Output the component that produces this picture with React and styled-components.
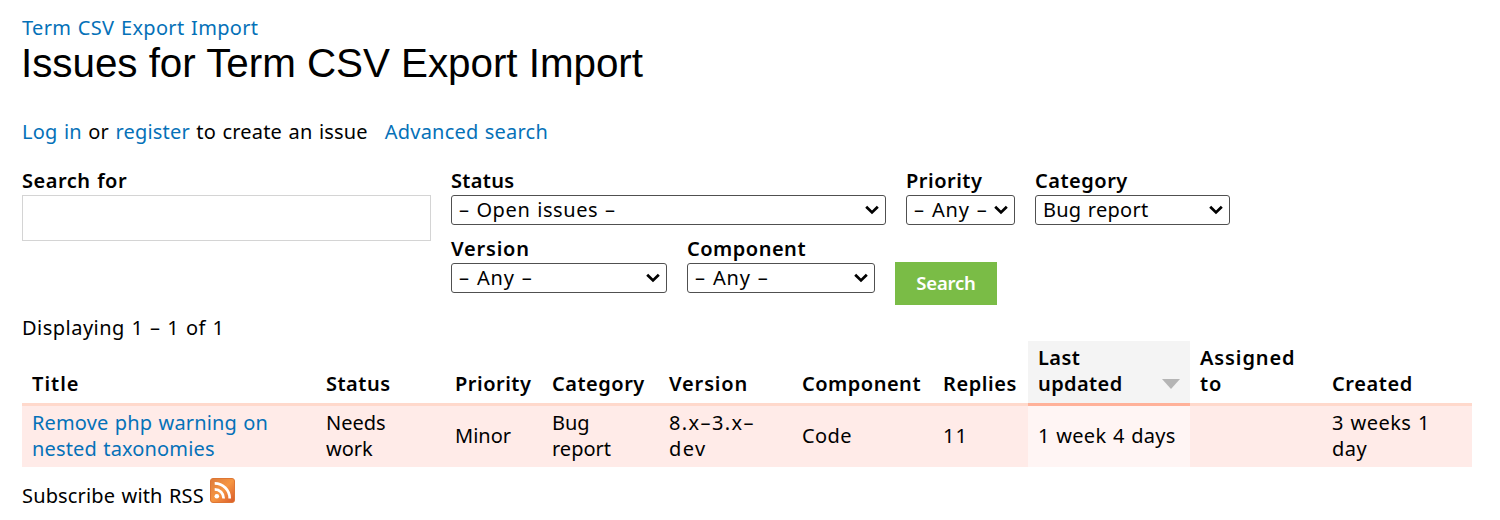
import React from "react";
import styled, { createGlobalStyle } from "styled-components";

const GlobalStyle = createGlobalStyle`
  *, *::before, *::after { box-sizing: border-box; }
  body {
    margin: 0;
    background: #fff;
    color: #000;
    font: 20px/26px "Noto Sans", "Open Sans", sans-serif;
    letter-spacing: 0.2px;
    word-spacing: 1px;
  }
`;

const Page = styled.main`
  width: 1500px;
  height: 520px;
  padding: 15px 28px 0 22px;
  overflow: hidden;
`;

const Link = styled.a`
  color: #0571b8;
  text-decoration: none;
`;

const Breadcrumb = styled.nav`
  height: 25px;
  letter-spacing: 0.33px;
`;

const Heading = styled.h1`
  margin: 0 0 33px -1px;
  font: 400 40.4px/46px "Liberation Sans", sans-serif;
  letter-spacing: -0.04px;
  word-spacing: 0;
`;

const Actions = styled.div`
  display: flex;
  gap: 17px;
  height: 26px;
  margin: 0 0 23px 0;
`;

const Filters = styled.form`
  display: flex;
  gap: 20px;
  margin-bottom: 10px;
`;

const FilterRows = styled.div`
  display: flex;
  flex-direction: column;
  gap: 10px;
`;

const FilterRow = styled.div`
  display: flex;
  gap: 20px;
  height: ${(p) => p.$height}px;
`;

const Field = styled.label`
  display: flex;
  flex-direction: column;
  width: ${(p) => p.$width}px;
`;

const Label = styled.span`
  height: 27px;
  font-weight: 600;
  letter-spacing: ${(p) => p.$tracking ?? 0.5}px;
`;

const TextInput = styled.input`
  width: 100%;
  height: 46px;
  border: 1px solid #d4d4d4;
  background: #fff;
`;

const Select = styled.button`
  display: flex;
  align-items: center;
  justify-content: space-between;
  width: 100%;
  height: 30px;
  padding: 0 5px 0 7px;
  border: 1px solid #505050;
  border-radius: 3px;
  background: #fff;
  color: #000;
  font: inherit;
  white-space: nowrap;
  letter-spacing: ${(p) => p.$tracking ?? 0.85}px;
  word-spacing: 1px;
`;

const Submit = styled.button`
  width: 102px;
  height: 43px;
  margin-top: 26px;
  padding: 0 0 2px;
  border: 0;
  background: #7abc46;
  color: #fff;
  font: 600 18.5px/41px "Noto Sans", sans-serif;
  letter-spacing: -0.2px;
`;

const Summary = styled.div`
  height: 26px;
  letter-spacing: 0.48px;
`;

const Table = styled.table`
  width: 1450px;
  table-layout: fixed;
  border-collapse: separate;
  border-spacing: 0;
`;

const HeadCell = styled.th`
  height: 65px;
  padding: 4px 8px 6px 10px;
  border-bottom: 3px solid ${(p) => (p.$active ? "#ffb199" : "#ffd9cc")};
  background: ${(p) => (p.$active ? "#f4f4f4" : "transparent")};
  font-weight: 600;
  letter-spacing: ${(p) => p.$tracking ?? 0.5}px;
  text-align: left;
  vertical-align: bottom;
`;

const SortLabel = styled.div`
  display: flex;
  align-items: flex-end;
  justify-content: space-between;
`;

const Cell = styled.td`
  height: 61px;
  padding: 4px 8px 5px 10px;
  background: ${(p) => (p.$active ? "#fff5f4" : "#ffebe8")};
  letter-spacing: ${(p) => p.$tracking ?? 0.15}px;
  vertical-align: middle;
`;

const Feed = styled.div`
  display: flex;
  align-items: flex-start;
  gap: 6px;
  margin-top: 11px;
`;

const FeedText = styled.span`
  padding-top: 5px;
  letter-spacing: 0.15px;
`;

const Chevron = () => (
  <svg width="16" height="12" viewBox="0 0 16 12" fill="none">
    <path d="M2.2 2.8 8 8.4l5.8-5.6" stroke="#000" strokeWidth="2.8" />
  </svg>
);

const SortArrow = styled.svg`
  margin: 0 2px 8px 0;
`;

const RssIcon = () => (
  <svg width="25" height="25" viewBox="0 0 25 25">
    <defs>
      <linearGradient id="rss" x1="0" y1="0" x2="1" y2="1">
        <stop offset="0" stopColor="#dc7b3c" />
        <stop offset="0.5" stopColor="#f69642" />
        <stop offset="1" stopColor="#d9592a" />
      </linearGradient>
    </defs>
    <rect x="0.5" y="0.5" width="24" height="24" rx="2.5" fill="url(#rss)" stroke="#de7634" />
    <circle cx="6.8" cy="18.2" r="2.3" fill="#fff" />
    <path d="M4.7 11.4a9 9 0 0 1 9 9M4.7 5.4a15 15 0 0 1 15 15" fill="none" stroke="#fff" strokeWidth="2.7" />
  </svg>
);

const SelectField = ({ label, value, width, tracking, labelTracking }) => (
  <Field $width={width}>
    <Label $tracking={labelTracking}>{label}</Label>
    <Select type="button" $tracking={tracking}>
      {value}
      <Chevron />
    </Select>
  </Field>
);

const columns = [
  { name: "Title", width: 294, tracking: 1 },
  { name: "Status", width: 129, tracking: 0.5 },
  { name: "Priority", width: 97 },
  { name: "Category", width: 117 },
  { name: "Version", width: 133, tracking: 0.85 },
  { name: "Component", width: 141 },
  { name: "Replies", width: 95, tracking: 0.55 },
  { name: <>Last<br />updated</>, width: 162, active: true, tracking: 0.4 },
  { name: <>Assigned<br />to</>, width: 132, tracking: 0.9 },
  { name: "Created", width: 150, tracking: 0.6 },
];

export default function App() {
  return (
    <Page>
      <GlobalStyle />
      <Breadcrumb>
        <Link>Term CSV Export Import</Link>
      </Breadcrumb>
      <Heading>Issues for Term CSV Export Import</Heading>
      <Actions>
        <span>
          <Link>Log in</Link> or <Link>register</Link> to create an issue
        </span>
        <Link>Advanced search</Link>
      </Actions>

      <Filters>
        <Field $width={409}>
          <Label>Search for</Label>
          <TextInput />
        </Field>
        <FilterRows>
          <FilterRow $height={58}>
            <SelectField label="Status" value="– Open issues –" width={435} tracking={0.6} labelTracking={0.3} />
            <SelectField label="Priority" value="– Any –" width={109} />
            <SelectField label="Category" value="Bug report" width={195} tracking={0.25} />
          </FilterRow>
          <FilterRow $height={69}>
            <SelectField label="Version" value="– Any –" width={216} labelTracking={0.8} />
            <SelectField label="Component" value="– Any –" width={188} />
            <Submit type="button">Search</Submit>
          </FilterRow>
        </FilterRows>
      </Filters>

      <Summary>Displaying 1 – 1 of 1</Summary>

      <Table>
        <colgroup>
          {columns.map((c, i) => (
            <col key={i} width={c.width} />
          ))}
        </colgroup>
        <thead>
          <tr>
            {columns.map((c, i) => (
              <HeadCell key={i} $active={c.active} $tracking={c.tracking}>
                {c.active ? (
                  <SortLabel>
                    <span>{c.name}</span>
                    <SortArrow width="18" height="10" viewBox="0 0 18 10">
                      <path d="M0 0h18L9 10z" fill="#b5b5b5" />
                    </SortArrow>
                  </SortLabel>
                ) : (
                  c.name
                )}
              </HeadCell>
            ))}
          </tr>
        </thead>
        <tbody>
          <tr>
            <Cell>
              <Link>Remove php warning on<br />nested taxonomies</Link>
            </Cell>
            <Cell $tracking={0}>Needs<br />work</Cell>
            <Cell $tracking={0}>Minor</Cell>
            <Cell $tracking={0}>Bug<br />report</Cell>
            <Cell $tracking={1.4}>8.x–3.x–<br />dev</Cell>
            <Cell $tracking={0.4}>Code</Cell>
            <Cell $tracking={1}>11</Cell>
            <Cell $active $tracking={0.3}>1 week 4 days</Cell>
            <Cell />
            <Cell $tracking={0.45}>3 weeks 1<br />day</Cell>
          </tr>
        </tbody>
      </Table>

      <Feed>
        <FeedText>Subscribe with RSS</FeedText>
        <RssIcon />
      </Feed>
    </Page>
  );
}
